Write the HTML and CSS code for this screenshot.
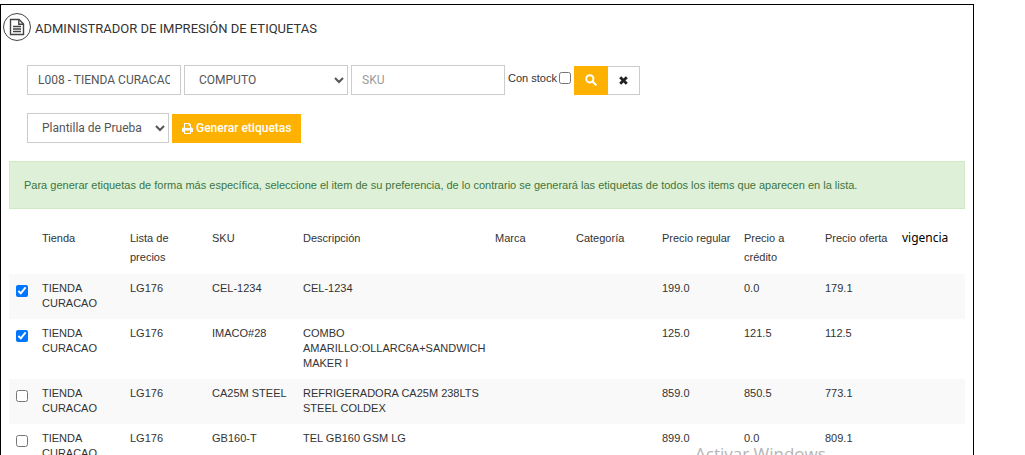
FILE: index.html
```
<!DOCTYPE html>
<html lang="es">
<head>
    <meta charset="UTF-8">
    <meta name="viewport" content="width=device-width, initial-scale=1.0">
    <title>Administrador de impresión de etiquetas</title>
    <link rel="stylesheet" href="styles.css">
</head>
<body>
    <main class="panel">
        <header class="panel-header">
            <span class="header-icon">
                <svg width="16" height="18" viewBox="0 0 16 18" fill="none" stroke="#444" stroke-width="1.4">
                    <path d="M1.500 1.500h8.500l4.500 4.500v10.500h-13z"/>
                    <path d="M9.800 1.500v4.700h4.700M4 8.500h8M4 11h8M4 13.500h8"/>
                </svg>
            </span>
            <h1>ADMINISTRADOR DE IMPRESIÓN DE ETIQUETAS</h1>
        </header>
        <form class="filters">
            <div class="filter-row">
                <input type="text" class="control tienda" aria-label="Tienda" value="L008 - TIENDA CURACAO">
                <select class="control categoria" aria-label="Categoría">
                    <option>COMPUTO</option>
                </select>
                <input type="text" class="control sku" aria-label="SKU" placeholder="SKU">
                <label class="stock">Con stock <input type="checkbox"></label>
                <div class="btn-group">
                    <button type="button" class="btn btn-primary btn-search" aria-label="Buscar">
                        <svg width="12" height="12" viewBox="0 0 12 12" fill="none" stroke="#fff" stroke-width="2">
                            <circle cx="4.800" cy="4.800" r="3.600"/>
                            <path d="M7.500 7.500l3.300 3.300" stroke-linecap="round"/>
                        </svg>
                    </button>
                    <button type="button" class="btn btn-clear" aria-label="Limpiar">
                        <svg width="9" height="9" viewBox="0 0 9 9" stroke="#222" stroke-width="2.800">
                            <path d="M1.200 1.200l6.600 6.600M7.800 1.200l-6.600 6.600"/>
                        </svg>
                    </button>
                </div>
            </div>
            <div class="filter-row">
                <select class="control plantilla" aria-label="Plantilla">
                    <option>Plantilla de Prueba</option>
                </select>
                <button type="button" class="btn btn-primary btn-print">
                    <svg width="11" height="11" viewBox="0 0 11 11" fill="#fff">
                        <path fill-rule="evenodd" d="M2 0h5.500L9 1.500V4.500h.5Q11 4.500 11 6v3H9v2H2V9H0V6q0-1.500 1.500-1.500H2zM3 1v4h5V2.500H6.500V1zM3 7.500V10h5V7.500z"/>
                    </svg>
                    Generar etiquetas
                </button>
            </div>
        </form>
        <div class="alert">Para generar etiquetas de forma más específica, seleccione el item de su preferencia, de lo contrario se generará las etiquetas de todos los items que aparecen en la lista.</div>
        <table class="items">
            <colgroup>
                <col class="c-check">
                <col class="c-tienda">
                <col class="c-lista">
                <col class="c-sku">
                <col class="c-desc">
                <col class="c-marca">
                <col class="c-cat">
                <col class="c-regular">
                <col class="c-credito">
                <col class="c-oferta">
                <col class="c-vigencia">
            </colgroup>
            <thead>
                <tr>
                    <th></th>
                    <th>Tienda</th>
                    <th>Lista de precios</th>
                    <th>SKU</th>
                    <th>Descripción</th>
                    <th>Marca</th>
                    <th>Categoría</th>
                    <th>Precio regular</th>
                    <th>Precio a crédito</th>
                    <th>Precio oferta</th>
                    <th class="vigencia">vigencia</th>
                </tr>
            </thead>
            <tbody>
                <tr>
                    <td><input type="checkbox" aria-label="CEL-1234" checked></td>
                    <td>TIENDA CURACAO</td>
                    <td>LG176</td>
                    <td>CEL-1234</td>
                    <td>CEL-1234</td>
                    <td></td>
                    <td></td>
                    <td>199.0</td>
                    <td>0.0</td>
                    <td>179.1</td>
                    <td></td>
                </tr>
                <tr>
                    <td><input type="checkbox" aria-label="IMACO#28" checked></td>
                    <td>TIENDA CURACAO</td>
                    <td>LG176</td>
                    <td>IMACO#28</td>
                    <td>COMBO AMARILLO:OLLARC6A+SANDWICH MAKER I</td>
                    <td></td>
                    <td></td>
                    <td>125.0</td>
                    <td>121.5</td>
                    <td>112.5</td>
                    <td></td>
                </tr>
                <tr>
                    <td><input type="checkbox" aria-label="CA25M STEEL"></td>
                    <td>TIENDA CURACAO</td>
                    <td>LG176</td>
                    <td>CA25M STEEL</td>
                    <td>REFRIGERADORA CA25M 238LTS STEEL COLDEX</td>
                    <td></td>
                    <td></td>
                    <td>859.0</td>
                    <td>850.5</td>
                    <td>773.1</td>
                    <td></td>
                </tr>
                <tr>
                    <td><input type="checkbox" aria-label="GB160-T"></td>
                    <td>TIENDA CURACAO</td>
                    <td>LG176</td>
                    <td>GB160-T</td>
                    <td>TEL GB160 GSM LG</td>
                    <td></td>
                    <td></td>
                    <td>899.0</td>
                    <td>0.0</td>
                    <td>809.1</td>
                    <td></td>
                </tr>
            </tbody>
        </table>
    </main>
    <div class="watermark">Activar Windows</div>
</body>
</html>
```
FILE: styles.css
```
* {
    box-sizing: border-box;
}
body {
    margin: 0;
    height: 100vh;
    overflow: hidden;
    position: relative;
    display: flex;
    padding-top: 4px;
    background-color: #fff;
    color: #333;
    font-family: "Liberation Sans", Arial, sans-serif;
    font-size: 11px;
}
.panel {
    width: 95%;
    height: 100%;
    overflow: hidden;
    border: 1px solid #000;
    border-bottom: 0;
    padding: 8px;
}
.panel-header {
    display: flex;
    align-items: center;
    gap: 4px;
    margin-left: -6px;
}
.header-icon {
    display: flex;
    align-items: center;
    justify-content: center;
    width: 28px;
    height: 28px;
    border: 1px solid #444;
    border-radius: 50%;
}
h1 {
    margin: 0;
    padding-top: 3px;
    font-family: Roboto, sans-serif;
    font-size: 13px;
    font-weight: 400;
}
.filters {
    padding: 24px 18px 0;
}
.filter-row {
    display: flex;
    align-items: center;
    gap: 3px;
    margin-bottom: 18px;
}
.control {
    height: 30px;
    padding: 0 10px;
    border: 1px solid #ccc;
    border-radius: 0;
    background-color: #fff;
    color: #555;
    font-family: Roboto, sans-serif;
    font-size: 12px;
}
.control::placeholder {
    color: #999;
}
.tienda,
.sku {
    width: 154px;
}
.categoria {
    width: 164px;
}
.plantilla {
    width: 142px;
    padding-right: 0;
}
.stock {
    display: flex;
    align-items: center;
    gap: 2px;
    margin-bottom: 4px;
}
input[type="checkbox"] {
    display: block;
    width: 12px;
    height: 12px;
    margin: 0;
}
.btn-group {
    display: flex;
}
.btn {
    display: flex;
    align-items: center;
    justify-content: center;
    gap: 3px;
    height: 29px;
    padding: 0;
    border: 1px solid #ccc;
    background-color: #fff;
    font-family: Roboto, sans-serif;
    font-size: 12px;
    font-weight: 500;
}
.btn-primary {
    border-color: #ffb100;
    background-color: #ffb100;
    color: #fff;
}
.btn-search {
    width: 34px;
}
.btn-clear {
    width: 32px;
    border-left: 0;
}
.btn-print {
    padding: 0 9px;
}
.alert {
    padding: 16px 14px;
    border: 1px solid #d0e9c6;
    background-color: #dff0d8;
    color: #3c763d;
    line-height: 14px;
}
.items {
    width: 100%;
    margin-top: 12px;
    table-layout: fixed;
    border-collapse: collapse;
}
.items th,
.items td {
    padding: 7px 0 8px 8px;
    text-align: left;
    vertical-align: top;
    font-weight: 400;
    line-height: 15px;
}
.items th {
    padding: 8px 0 7px 8px;
    line-height: 19px;
}
.items td:first-child {
    padding: 11px 0 0 7px;
}
.items th.vigencia {
    color: #000;
    font-family: "Noto Sans", sans-serif;
    font-size: 12px;
    line-height: 17px;
}
.items tbody tr:nth-child(odd) {
    background-color: #f9f9f9;
}
.c-check {
    width: 25px;
}
.c-tienda {
    width: 88px;
}
.c-lista,
.c-regular {
    width: 82px;
}
.c-marca,
.c-credito {
    width: 81px;
}
.c-sku {
    width: 91px;
}
.c-desc {
    width: 192px;
}
.c-cat {
    width: 86px;
}
.c-oferta {
    width: 77px;
}
.c-vigencia {
    width: 71px;
}
.watermark {
    position: absolute;
    left: 695px;
    bottom: -10px;
    color: #b5b5b5;
    font-family: "Open Sans", sans-serif;
    font-size: 17px;
    line-height: 22px;
}
```
